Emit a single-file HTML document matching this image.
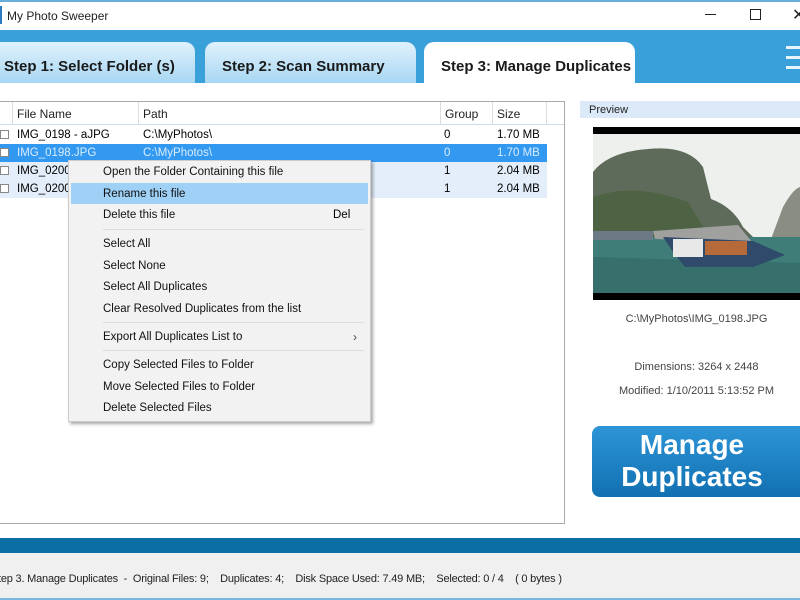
<!DOCTYPE html>
<html><head><meta charset="utf-8"><style>
*{margin:0;padding:0;box-sizing:border-box}
body{width:800px;height:600px;overflow:hidden;background:#fff;font-family:"Liberation Sans",sans-serif;position:relative;font-size:12px;color:#000}
.a{position:absolute}
.tab{position:absolute;top:42px;height:41px;border-radius:10px 10px 0 0;font-weight:bold;font-size:15px;color:#1a1a1a;line-height:49px;padding-left:14px}
.hd{position:absolute;top:102px;height:23px;line-height:24px;font-size:12px;color:#222;border-right:1px solid #ddd;padding-left:4px}
.row{position:absolute;left:0;width:547px;height:18px;line-height:19px;font-size:11.5px}
.row span{position:absolute}
.cb{position:absolute;left:0;top:4px;width:9px;height:9px;border:1px solid #888;background:#fff}
.mi{position:absolute;left:34px;font-size:11.5px;color:#111}
.sep{position:absolute;left:34px;right:6px;height:1px;background:#ddd}
.pt{position:absolute;left:593px;width:207px;text-align:center;font-size:11px;color:#444}
</style></head><body>
<div class="a" style="left:0;top:0;width:800px;height:2px;background:#6aaedc"></div>
<div class="a" style="left:0;top:6px;width:2px;height:18px;background:#2a7bc0"></div>
<div class="a" style="left:7px;top:9px;font-size:12px;color:#222">My Photo Sweeper</div>
<div class="a" style="left:705px;top:14px;width:11px;height:1px;background:#222"></div>
<div class="a" style="left:750px;top:9px;width:11px;height:11px;border:1px solid #222"></div>
<div class="a" style="left:792px;top:5px;font-size:16px;color:#222">✕</div>
<div class="a" style="left:0;top:30px;width:800px;height:53px;background:#3aa0da"></div>
<div class="tab" style="left:-10px;width:205px;background:linear-gradient(#e0f1fc,#a8d7f3);padding-left:14px">Step 1: Select Folder (s)</div>
<div class="tab" style="left:205px;width:211px;background:linear-gradient(#e0f1fc,#a8d7f3);padding-left:17px">Step 2: Scan Summary</div>
<div class="tab" style="left:424px;width:211px;background:#fff;padding-left:17px">Step 3: Manage Duplicates</div>
<div class="a" style="left:786px;top:46px;width:14px;height:3px;background:#e8f4fc"></div>
<div class="a" style="left:786px;top:56px;width:14px;height:3px;background:#e8f4fc"></div>
<div class="a" style="left:786px;top:66px;width:14px;height:3px;background:#e8f4fc"></div>

<div class="a" style="left:-1px;top:101px;width:566px;height:423px;border:1px solid #aaa;background:#fff"></div>
<div class="a" style="left:0;top:102px;width:564px;height:23px;background:#fff;border-bottom:1px solid #cfdbe8"></div>
<div class="hd" style="left:0;width:13px"></div>
<div class="hd" style="left:13px;width:126px">File Name</div>
<div class="hd" style="left:139px;width:302px">Path</div>
<div class="hd" style="left:441px;width:52px">Group</div>
<div class="hd" style="left:493px;width:54px">Size</div>

<div class="row" style="top:126px"><div class="cb"></div><span style="left:17px">IMG_0198 - aJPG</span><span style="left:143px">C:\MyPhotos\</span><span style="left:444px">0</span><span style="left:497px">1.70 MB</span></div>
<div class="row" style="top:144px;background:#3399f0;color:#d8ecff"><div class="cb"></div><span style="left:17px">IMG_0198.JPG</span><span style="left:143px">C:\MyPhotos\</span><span style="left:444px">0</span><span style="left:497px">1.70 MB</span></div>
<div class="row" style="top:162px;background:#e3eefa"><div class="cb"></div><span style="left:17px">IMG_0200</span><span style="left:444px">1</span><span style="left:497px">2.04 MB</span></div>
<div class="row" style="top:180px;background:#e3eefa"><div class="cb"></div><span style="left:17px">IMG_0200</span><span style="left:444px">1</span><span style="left:497px">2.04 MB</span></div>

<div class="a" style="left:68px;top:160px;width:303px;height:262px;background:#f2f2f2;border:1px solid #ccc;box-shadow:2px 2px 3px rgba(0,0,0,.35)">
<div class="a" style="left:2px;top:22px;width:297px;height:21px;background:#9fd0f5"></div>
<div class="mi" style="top:5px">Open the Folder Containing this file</div>
<div class="mi" style="top:27px">Rename this file</div>
<div class="mi" style="top:48px">Delete this file</div>
<div class="a" style="left:264px;top:48px;font-size:11.5px">Del</div>
<div class="sep" style="top:68px"></div>
<div class="mi" style="top:77px">Select All</div>
<div class="mi" style="top:99px">Select None</div>
<div class="mi" style="top:120px">Select All Duplicates</div>
<div class="mi" style="top:142px">Clear Resolved Duplicates from the list</div>
<div class="sep" style="top:161px"></div>
<div class="mi" style="top:170px">Export All Duplicates List to</div>
<div class="a" style="left:284px;top:169px;font-size:12px;color:#444">›</div>
<div class="sep" style="top:189px"></div>
<div class="mi" style="top:198px">Copy Selected Files to Folder</div>
<div class="mi" style="top:220px">Move Selected Files to Folder</div>
<div class="mi" style="top:241px">Delete Selected Files</div>
</div>

<div class="a" style="left:580px;top:101px;width:220px;height:17px;background:#dce9f8;font-size:11px;line-height:18px;padding-left:9px;color:#222">Preview</div>
<svg class="a" style="left:593px;top:127px" width="207" height="173" viewBox="0 0 207 173">
<rect width="207" height="173" fill="#000"/>
<rect y="7" width="207" height="159" fill="#eef0ee"/>
<path d="M0 45 Q15 25 55 22 Q95 18 110 40 L118 72 Q140 80 150 100 L160 110 L0 112Z" fill="#5f6b5a"/>
<path d="M0 70 Q40 55 95 75 L115 108 L0 112Z" fill="#4e6344"/>
<path d="M178 112 L190 80 Q200 62 207 60 L207 118Z" fill="#8a8d84"/>
<rect y="110" width="207" height="56" fill="#3e7d78"/>
<path d="M0 130 L207 136 L207 166 L0 166Z" fill="#366f6b"/>
<path d="M60 104 L145 98 L160 116 L62 112Z" fill="#a0a09e"/>
<path d="M70 110 L160 114 L192 128 L160 140 L92 140 L80 125Z" fill="#2f4a6a"/>
<rect x="80" y="112" width="30" height="18" fill="#e8e8e8"/>
<rect x="112" y="114" width="42" height="14" fill="#b66a3a"/>
<rect x="0" y="104" width="60" height="9" fill="#6b7a85"/>
</svg>
<div class="pt" style="top:313px">C:\MyPhotos\IMG_0198.JPG</div>
<div class="pt" style="top:361px">Dimensions: 3264 x 2448</div>
<div class="pt" style="top:385px">Modified: 1/10/2011 5:13:52 PM</div>
<div class="a" style="left:592px;top:426px;width:216px;height:71px;border-radius:8px;background:linear-gradient(#2d95d6,#1170b2);color:#fff;font-weight:bold;font-size:28px;line-height:32px;text-align:center;padding-top:3px;padding-right:16px">Manage<br>Duplicates</div>

<div class="a" style="left:0;top:538px;width:800px;height:15px;background:#0b6fa6"></div>
<div class="a" style="left:0;top:553px;width:800px;height:47px;background:#f0f0f0"></div>
<div class="a" style="left:0;top:598px;width:800px;height:2px;background:#7ab6de"></div>
<div class="a" style="left:-2px;top:573px;font-size:11px;color:#222;white-space:pre;letter-spacing:-0.2px">tep 3. Manage Duplicates  -  Original Files: 9;    Duplicates: 4;    Disk Space Used: 7.49 MB;    Selected: 0 / 4    ( 0 bytes )</div>
</body></html>
